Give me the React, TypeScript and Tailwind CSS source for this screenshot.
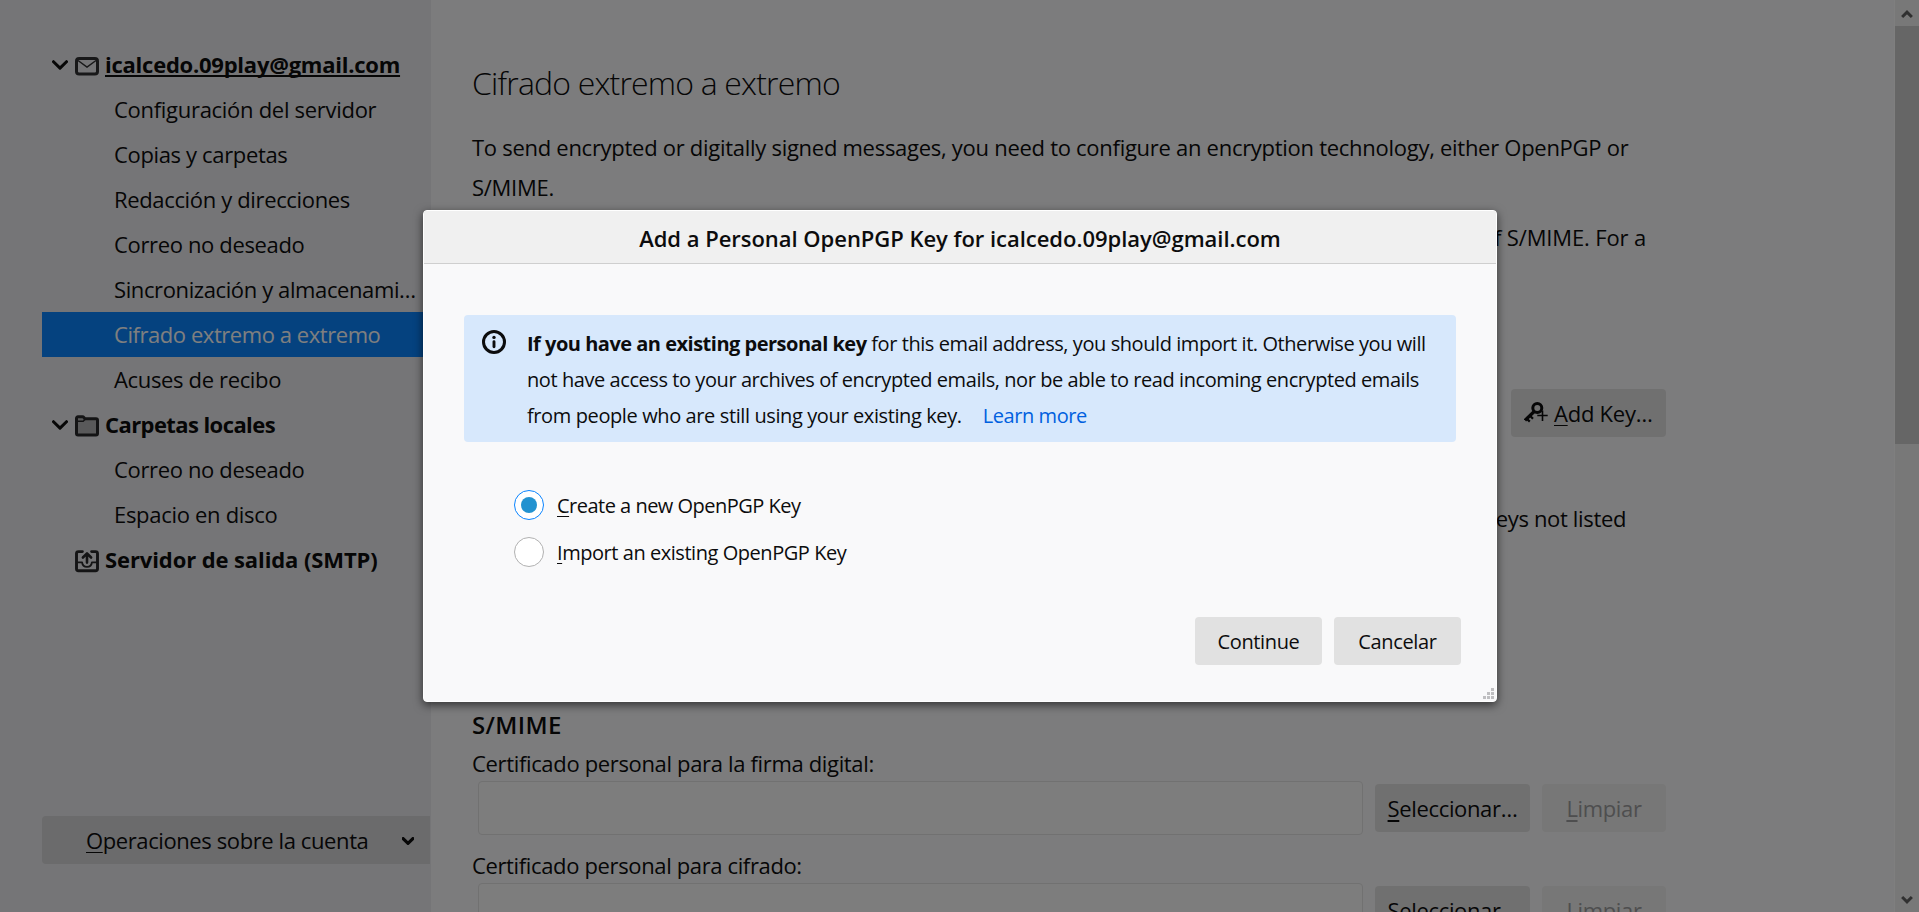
import type { ReactNode } from "react";

function Chevron({ className = "" }: { className?: string }) {
  return (
    <svg className={className} viewBox="0 0 16 10" fill="none" stroke="currentColor" strokeWidth="3" strokeLinecap="round" strokeLinejoin="round">
      <path d="M1.5 1.7 8 8.100l6.500-6.400" />
    </svg>
  );
}

function MailIcon() {
  return (
    <svg className="mt-[2px] h-6 w-6" viewBox="0 0 24 24" fill="none" stroke="#303033">
      <rect x="1.500" y="4.500" width="21" height="15.500" rx="2.600" strokeWidth="3" />
      <path d="M3 6.500l9 6.500 9-6.500" strokeWidth="1.500" />
    </svg>
  );
}

function FolderIcon() {
  return (
    <svg className="mt-[3px] h-6 w-6" viewBox="0 0 24 24" fill="none" stroke="#28282b" strokeWidth="3" strokeLinejoin="round">
      <path d="M1.500 19.500V4.300c0-.8.600-1.500 1.500-1.500h4.400c.7 0 1.200.3 1.600.8l.9 1.100H21c.8 0 1.500.6 1.500 1.500v13.300c0 .8-.7 1.500-1.500 1.500H3c-.9 0-1.500-.7-1.500-1.500z" fill="#b3b3b5" />
      <path d="M2 7.300h6.200l2-2" strokeWidth="1.500" />
    </svg>
  );
}

function OutgoingIcon() {
  return (
    <svg className="mt-[3px] h-6 w-6" viewBox="0 0 24 24" fill="none" stroke="#28282b" strokeLinecap="round" strokeLinejoin="round">
      <path d="M7.400 2.600H3.500c-1.100 0-2 .9-2 2v15.200c0 1.100.9 2 2 2h17c1.100 0 2-.9 2-2V4.600c0-1.100-.9-2-2-2h-3.900" strokeWidth="2.900" />
      <path d="M2 13.300h5.100c.3 2.700 2.300 4.500 4.900 4.500s4.600-1.800 4.900-4.500H22" strokeWidth="1.800" />
      <path d="M12 13.600V4.700M7.900 8.500 12 4.400l4.100 4.100" strokeWidth="2.600" />
    </svg>
  );
}

function KeyIcon() {
  return (
    <svg className="h-6 w-6" viewBox="0 0 24 24" fill="none" stroke="#0c0c0d">
      <circle cx="13.300" cy="7" r="4.500" strokeWidth="3" />
      <path d="M10.200 10.500 1 19.300" strokeWidth="3.200" />
      <path d="M2.600 17.600l3.200 3M6 14.700l3 3" strokeWidth="2.200" />
      <path d="M18.500 9.500v10.500M13.300 14.500h10.400" strokeWidth="1.600" />
    </svg>
  );
}

function InfoIcon() {
  return (
    <svg className="mt-[5px] h-6 w-6 shrink-0" viewBox="0 0 24 24" fill="none" stroke="#0c0c0d">
      <circle cx="12" cy="12" r="10.500" strokeWidth="3" />
      <circle cx="12" cy="7.400" r="1.700" fill="#0c0c0d" stroke="none" />
      <path d="M12 11.800v4.900" strokeWidth="2.900" strokeLinecap="round" />
    </svg>
  );
}

function Account({ icon, label, open, underlined, tracking }: { icon: ReactNode; label: string; open?: boolean; underlined?: boolean; tracking: string }) {
  return (
    <div className="flex h-[45px] items-center pl-[10px]">
      <div className="w-[23px] pt-px">{open && <Chevron className="h-[10px] w-4" />}</div>
      {icon}
      <span className={`mb-px ml-[6px] whitespace-nowrap font-bold ${tracking} ${underlined ? "underline decoration-2 underline-offset-2 [text-decoration-skip-ink:none]" : ""}`}>{label}</span>
    </div>
  );
}

function Child({ label, selected, tracking = "tracking-[-0.35px]" }: { label: string; selected?: boolean; tracking?: string }) {
  return (
    <div className={`flex h-[45px] items-center whitespace-nowrap pb-px pl-[72px] ${tracking} ${selected ? "bg-[#0a84ff] text-white" : ""}`}>
      {label}
    </div>
  );
}

function AccessKey({ text, thick }: { text: string; thick?: boolean }) {
  return (
    <span className="whitespace-nowrap">
      <span className={`underline underline-offset-[3px] [text-decoration-skip-ink:none] ${thick ? "decoration-2" : "decoration-1"}`}>{text[0]}</span>
      {text.slice(1)}
    </span>
  );
}

function CertificateRow() {
  return (
    <div className="flex items-center">
      <div className="ml-[5.5px] h-[54px] w-[885px] rounded border border-[#e2e2e3] bg-[#fafafa]" />
      <button className="ml-3 flex h-12 w-[155px] items-center justify-center rounded bg-[#e0e0e1] pl-px tracking-[-0.35px]">
        <AccessKey text="Seleccionar…" thick />
      </button>
      <button className="ml-3 flex h-12 w-[124px] items-center justify-center rounded bg-[#eeeeee] pl-px tracking-[-0.35px] text-[#9d9d9e]">
        <AccessKey text="Limpiar" thick />
      </button>
    </div>
  );
}

function Radio({ label, checked, tracking }: { label: string; checked?: boolean; tracking: string }) {
  return (
    <label className={`flex h-[30px] items-center gap-[13px] ${tracking}`}>
      <span className={`flex h-[30px] w-[30px] items-center justify-center rounded-full border bg-white ${checked ? "border-[#0a84ff]" : "border-[#b1b1b1]"}`}>
        {checked && <span className="h-4 w-4 rounded-full bg-[#2292d0]" />}
      </span>
      <span className="pt-[2px]">
        <AccessKey text={label} />
      </span>
    </label>
  );
}

function Dialog() {
  return (
    <div className="absolute left-[423px] top-[210px] flex h-[492px] w-[1074px] flex-col rounded border border-white bg-[#f9f9fa] text-[20px] text-[#0c0c0d] shadow-[0_3px_10px_rgba(0,0,0,0.6)]">
      <div className="flex h-[53px] items-center justify-center border-b border-[#cfcfcf] bg-[#f0f0f0] pt-[2px] text-[22px] font-semibold tracking-[-0.03px]">
        Add a Personal OpenPGP Key for icalcedo.09play@gmail.com
      </div>
      <div className="ml-10 mt-[51px] flex h-[127px] w-[992px] rounded bg-[#d7e8fc] pl-[18px] pt-[10px]">
        <InfoIcon />
        <div className="ml-[21px] mt-px whitespace-nowrap leading-9 tracking-[-0.43px]">
          <div>
            <span className="font-bold tracking-[-0.5px]">If you have an existing personal key</span> for this email address, you should import it. Otherwise you will
          </div>
          <div>not have access to your archives of encrypted emails, nor be able to read incoming encrypted emails</div>
          <div>
            <span className="tracking-[-0.39px]">from people who are still using your existing key.</span>
            <span className="ml-[21px] text-[#0060df]">Learn more</span>
          </div>
        </div>
      </div>
      <div className="ml-[90px] mt-12 flex flex-col gap-[17px]">
        <Radio label="Create a new OpenPGP Key" checked tracking="tracking-[-0.51px]" />
        <Radio label="Import an existing OpenPGP Key" tracking="tracking-[-0.45px]" />
      </div>
      <div className="mr-[35px] mt-[50px] flex justify-end gap-3 tracking-[-0.35px]">
        <button className="h-12 w-[127px] rounded bg-[#e1e1e1] pt-[2px]">Continue</button>
        <button className="h-12 w-[127px] rounded bg-[#e1e1e1] pt-[2px]">Cancelar</button>
      </div>
      <svg className="absolute bottom-[2px] right-[2px] h-[11px] w-[11px]" viewBox="0 0 11 11" fill="#bfbfc1">
        <path d="M8 0h3v3H8zM4 4h3v3H4zM8 4h3v3H8zM0 8h3v3H0zM4 8h3v3H4zM8 8h3v3H8z" />
      </svg>
    </div>
  );
}

export default function App() {
  return (
    <div className="relative flex h-[912px] w-[1919px] overflow-hidden bg-[#f9f9fa] font-['Open_Sans','Noto_Sans',sans-serif] text-[22px] leading-none text-[#0c0c0d]">
      <aside className="flex w-[431px] flex-col bg-[#ebebee] pb-12 pl-[42px] pt-[42px]">
        <Account open underlined icon={<MailIcon />} label="icalcedo.09play@gmail.com" tracking="tracking-[-0.24px]" />
        <Child label="Configuración del servidor" tracking="tracking-[-0.29px]" />
        <Child label="Copias y carpetas" />
        <Child label="Redacción y direcciones" />
        <Child label="Correo no deseado" />
        <Child label="Sincronización y almacenami…" tracking="tracking-[-0.39px]" />
        <Child label="Cifrado extremo a extremo" selected tracking="tracking-[-0.44px]" />
        <Child label="Acuses de recibo" />
        <Account open icon={<FolderIcon />} label="Carpetas locales" tracking="tracking-[-0.58px]" />
        <Child label="Correo no deseado" />
        <Child label="Espacio en disco" tracking="tracking-[-0.3px]" />
        <Account icon={<OutgoingIcon />} label="Servidor de salida (SMTP)" tracking="tracking-[-0.1px]" />
        <button className="mt-auto flex h-12 w-[388px] items-center rounded-l bg-[#d6d6d9] pl-11 tracking-[-0.4px]">
          <AccessKey text="Operaciones sobre la cuenta" />
          <Chevron className="ml-auto mr-4 mt-px h-2 w-3 [stroke-width:4.2]" />
        </button>
      </aside>

      <main className="flex w-[1463px] flex-col pl-[41px] pt-[63px]">
        <h1 className="h-10 text-[32px] font-light leading-10 tracking-[-0.82px] text-[#0c0c0d]">Cifrado extremo a extremo</h1>
        <p className="mt-[24px] w-[1194px] leading-10 tracking-[-0.28px]">
          To send encrypted or digitally signed messages, you need to configure an encryption technology, either OpenPGP or
          <br />
          S/MIME.
        </p>
        <p className="mt-[10px] w-[1174px] text-right leading-10 tracking-[-0.15px]">of S/MIME. For a</p>
        <div className="mt-[132px] flex w-[1194px] justify-end">
          <button className="flex h-12 w-[155px] items-center rounded bg-[#e0e0e1] pl-[13px] tracking-[-0.25px]">
            <KeyIcon />
            <span className="ml-[6px]">
              <AccessKey text="Add Key…" />
            </span>
          </button>
        </div>
        <p className="mt-[61px] w-[1154px] text-right leading-10 tracking-[-0.35px]">keys not listed</p>
        <h2 className="mt-[167px] h-10 text-[24px] font-semibold leading-10 tracking-[0.4px]">S/MIME</h2>
        <p className="h-9 leading-9 tracking-[-0.34px]">Certificado personal para la firma digital:</p>
        <CertificateRow />
        <p className="mt-[12px] h-9 leading-9 tracking-[-0.36px]">Certificado personal para cifrado:</p>
        <CertificateRow />
      </main>

      <div className="flex w-[25px] flex-col items-center border-l border-[#fefefe] bg-[#f0f0f0] text-[#606060]">
        <div className="flex h-[26px] items-center pt-[3px]">
          <Chevron className="h-[9px] w-3 rotate-180 [stroke-linecap:butt] [stroke-linejoin:miter] [stroke-width:4]" />
        </div>
        <div className="h-[418px] w-full bg-[#cdcdcd]" />
        <div className="mt-auto flex h-[26px] items-center">
          <Chevron className="h-[9px] w-3 [stroke-linecap:butt] [stroke-linejoin:miter] [stroke-width:4]" />
        </div>
      </div>

      <div className="absolute inset-0 bg-black/50" />
      <Dialog />
    </div>
  );
}
